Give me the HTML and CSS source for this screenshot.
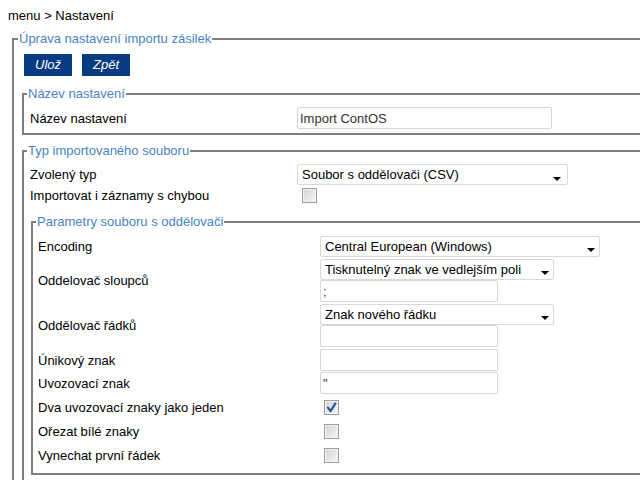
FILE: index.html
```html
<!DOCTYPE html>
<html lang="cs">
<head>
<meta charset="utf-8">
<title>Nastavení</title>
<link rel="stylesheet" href="styles.css">
</head>
<body>
<div class="crumb">menu &gt; Nastavení</div>
<fieldset class="fs outer">
  <legend>Úprava nastavení importu zásilek</legend>
  <div class="buttons">
    <button class="btn" type="button">Ulož</button>
    <button class="btn" type="button">Zpět</button>
  </div>

  <fieldset class="fs sub name">
    <legend>Název nastavení</legend>
    <div class="rows rows-a">
      <div class="row">
        <label class="lbl">Název nastavení</label>
        <input class="txt w255" type="text" value="Import ContOS">
      </div>
    </div>
  </fieldset>

  <fieldset class="fs sub type">
    <legend>Typ importovaného souboru</legend>
    <div class="rows rows-a">
      <div class="row">
        <label class="lbl">Zvolený typ</label>
        <div class="sel w271 far"><select><option>Soubor s oddělovači (CSV)</option></select></div>
      </div>
      <div class="row cb1">
        <label class="lbl">Importovat i záznamy s chybou</label>
        <span class="cb off5"></span>
      </div>
    </div>

    <fieldset class="fs inner">
      <legend>Parametry souboru s oddělovači</legend>
      <div class="rows rows-b">
        <div class="row">
          <label class="lbl">Encoding</label>
          <div class="sel w280"><select><option>Central European (Windows)</option></select></div>
        </div>
        <div class="row">
          <label class="lbl">Oddelovač sloupců</label>
          <div class="stack">
            <div class="sel w234"><select><option>Tisknutelný znak ve vedlejším poli</option></select></div>
            <input class="txt w178" type="text" value=";">
          </div>
        </div>
        <div class="row">
          <label class="lbl">Oddělovač řádků</label>
          <div class="stack">
            <div class="sel w234"><select><option>Znak nového řádku</option></select></div>
            <input class="txt w178" type="text" value="">
          </div>
        </div>
        <div class="row">
          <label class="lbl">Únikový znak</label>
          <input class="txt w178" type="text" value="">
        </div>
        <div class="row tight">
          <label class="lbl">Uvozovací znak</label>
          <input class="txt w178" type="text" value="&quot;">
        </div>
        <div class="row cbrow">
          <label class="lbl">Dva uvozovací znaky jako jeden</label>
          <span class="cb off4"><svg viewBox="0 0 15 15" width="15" height="15"><path d="M4 7.6 L6.6 11.2 L11.4 3.4" fill="none" stroke="#2f55a0" stroke-width="2.2" stroke-linecap="round" stroke-linejoin="round"/></svg></span>
        </div>
        <div class="row cbrow">
          <label class="lbl">Ořezat bílé znaky</label>
          <span class="cb off4"></span>
        </div>
        <div class="row cbrow">
          <label class="lbl">Vynechat první řádek</label>
          <span class="cb off4"></span>
        </div>
      </div>
    </fieldset>
  </fieldset>
</fieldset>
</body>
</html>
```

FILE: styles.css
```css
html, body {
  overflow: hidden;
}
body {
  margin: 0;
  padding: 8px 0 0 8px;
  background: #fff;
  color: #000;
  font-family: "Liberation Sans", Arial, sans-serif;
  font-size: 13px;
  line-height: 15px;
}
.crumb {
  height: 15px;
}
.fs {
  border: 2px solid #7f7f7f;
  margin: 0;
  padding: 0;
  min-inline-size: 0;
}
.fs > legend {
  color: #4b82c3;
  font-size: 13px;
  line-height: 15px;
  padding: 0 1px;
  margin-left: 3px;
}
.outer {
  margin: 8px 0 0 4px;
  width: 720px;
  height: 600px;
}
.outer > legend {
  margin-left: 4px;
}
.buttons {
  display: flex;
  gap: 10px;
  margin: 8px 0 0 10px;
}
.btn {
  height: 22px;
  padding: 0 11px;
  border: none;
  background: #073b82;
  color: #fff;
  font-family: "Liberation Sans", Arial, sans-serif;
  font-style: italic;
  font-size: 13px;
  line-height: 22px;
}
.sub {
  margin-left: 8px;
}
.name {
  margin-top: 10px;
  padding-bottom: 4px;
}
.type {
  margin-top: 8px;
  height: 500px;
}
.rows {
  display: flex;
  flex-direction: column;
  gap: 2px;
}
.rows-a {
  margin-top: 6px;
  padding-left: 6px;
}
.rows-a .lbl {
  flex: 0 0 267px;
}
.rows-b {
  margin-top: 7px;
  padding-left: 5px;
}
.rows-b .lbl {
  flex: 0 0 282px;
}
.row {
  display: flex;
  align-items: center;
}
.row.tight {
  margin-top: -1px;
}
.cb1 {
  height: 17px;
}
.cbrow {
  height: 22px;
}
.stack {
  display: flex;
  flex-direction: column;
}
.inner {
  margin: 10px 0 0 7px;
  padding-bottom: 7px;
}
.txt {
  box-sizing: border-box;
  height: 22px;
  margin: 0;
  padding: 0 2px;
  border: 1px solid #d3d8de;
  border-radius: 2px;
  background: #fff;
  color: #333;
  font-family: "Liberation Sans", Arial, sans-serif;
  font-size: 13px;
  outline: none;
}
.w255 { width: 255px; }
.w178 { width: 178px; }
.sel {
  position: relative;
  display: inline-block;
}
.sel select {
  appearance: none;
  -webkit-appearance: none;
  box-sizing: border-box;
  width: 100%;
  height: 21px;
  margin: 0;
  padding: 0 20px 0 4px;
  border: 1px solid #d9d9d9;
  border-radius: 2px;
  background: #fff;
  color: #000;
  font-family: "Liberation Sans", Arial, sans-serif;
  font-size: 13px;
  line-height: 19px;
  outline: none;
}
.sel::after {
  content: "";
  position: absolute;
  right: 5px;
  top: 12px;
  border-left: 4px solid transparent;
  border-right: 4px solid transparent;
  border-top: 4px solid #000;
}
.sel.far::after {
  right: 7px;
  top: 13px;
}
.w271 { width: 271px; }
.w280 { width: 280px; }
.w234 { width: 234px; }
.cb {
  box-sizing: border-box;
  display: inline-block;
  width: 15px;
  height: 15px;
  border: 1px solid #9d9d9d;
  background: linear-gradient(135deg, #d2d2d2 0%, #e6e6e6 55%, #f7f7f7 100%);
  box-shadow: inset 0 0 0 1px #f2f2f2;
  position: relative;
}
.cb svg {
  position: absolute;
  left: -1px;
  top: -1px;
}
.off5 { margin-left: 5px; }
.off4 { margin-left: 4px; }
```
